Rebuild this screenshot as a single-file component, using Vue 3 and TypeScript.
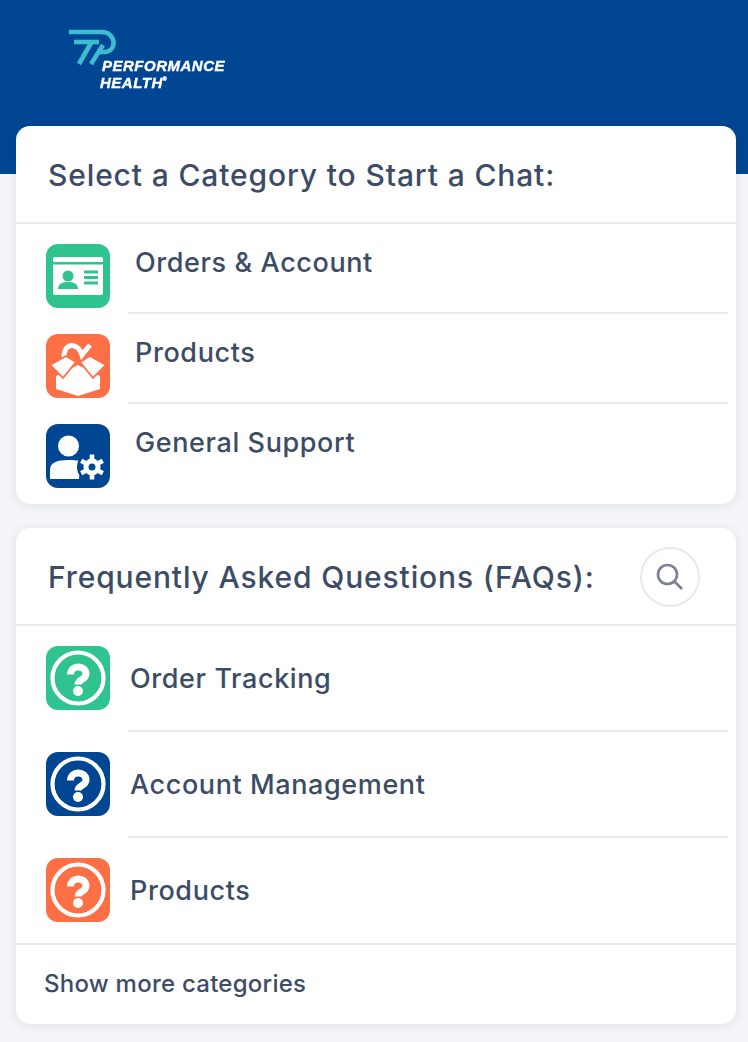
<script setup lang="ts">
interface Row { label: string; color: string; icon: string }
const chats: Row[] = [
  { label: 'Orders & Account', color: '#2fc48d', icon: 'id' },
  { label: 'Products', color: '#ff6f45', icon: 'box' },
  { label: 'General Support', color: '#004692', icon: 'user' },
]
const faqs: Row[] = [
  { label: 'Order Tracking', color: '#2fc48d', icon: 'q' },
  { label: 'Account Management', color: '#004692', icon: 'q' },
  { label: 'Products', color: '#ff6f45', icon: 'q' },
]
</script>

<template>
  <div class="page">
    <header class="hero">
      <div class="logo">
        <svg class="mark" viewBox="0 0 48 40" width="48" height="40">
          <g fill="none" stroke="#3dbcd3" stroke-width="4.600">
            <path d="M0 4H33C47 4 49 24 35 24H28" />
            <path d="M5 14H30" />
            <path d="M22 15 10 36" />
            <path d="M34 17 22 36" />
          </g>
        </svg>
        <div class="wordmark"><span class="w1">PERFORMANCE</span><span class="w2">HEALTH<sup>®</sup></span></div>
      </div>
    </header>

    <main class="content">
      <section class="card">
        <h2 class="card-title">Select a Category to Start a Chat:</h2>
        <ul class="list chat">
          <li v-for="r in chats" :key="r.label" class="row">
            <span class="tile" :style="{ background: r.color }">
              <svg v-if="r.icon === 'id'" viewBox="0 0 64 64">
                <rect x="7" y="13" width="50" height="38" rx="2" fill="#fff" />
                <rect x="7" y="18" width="50" height="2.500" :fill="r.color" />
                <circle cx="22" cy="32" r="5.500" :fill="r.color" />
                <path d="M12 45c0-6 5-7 10-7s10 1 10 7z" :fill="r.color" />
                <path d="M38 28h14M38 33.500h14M38 39h14" :stroke="r.color" stroke-width="2.800" />
              </svg>
              <svg v-else-if="r.icon === 'box'" viewBox="0 0 64 64">
                <path d="M18 23C18 8 32 8 36 21L44 11" fill="none" stroke="#fff" stroke-width="5" />
                <path d="M10 42 32 31 54 42V55L32 62 10 55Z" fill="#fff" />
                <path d="M4 31 20 22 30 28 17 44ZM60 31 44 22 34 28 47 44Z" fill="#fff" :stroke="r.color" stroke-width="1.800" />
              </svg>
              <svg v-else viewBox="0 0 64 64">
                <circle cx="22.500" cy="22" r="10.500" fill="#fff" />
                <path d="M4 55V46c0-7 6-10 19-10 6 0 9 .5 12 1.500L33 55z" fill="#fff" />
                <g transform="translate(46 43)">
                  <circle r="15" :fill="r.color" />
                  <circle r="6" fill="none" stroke="#fff" stroke-width="5" />
                  <path d="M0-12.500V-6M0 6V12.500M-10.800-6.300-5-3M5 3 10.800 6.300M-10.800 6.300-5 3M5-3 10.800-6.300" stroke="#fff" stroke-width="4.600" />
                </g>
              </svg>
            </span>
            <span class="label">{{ r.label }}</span>
          </li>
        </ul>
      </section>

      <section class="card">
        <div class="head">
          <h2 class="card-title bare">Frequently Asked Questions (FAQs):</h2>
          <button class="search" type="button" aria-label="Search">
            <svg viewBox="0 0 32 32" width="32" height="32" fill="none" stroke="#7a8194" stroke-width="2.600">
              <circle cx="13.500" cy="13.500" r="9.500" />
              <path d="M20.500 20.500 28 28" />
            </svg>
          </button>
        </div>
        <ul class="list faq">
          <li v-for="r in faqs" :key="r.label" class="row">
            <span class="tile" :style="{ background: r.color }">
              <svg viewBox="0 0 64 64">
                <circle cx="32" cy="32" r="25.500" fill="none" stroke="#fff" stroke-width="4.200" />
                <path d="M24.500 28.500c0-10 15.500-10 15.500-.5 0 6-8 5-8 10.500" fill="none" stroke="#fff" stroke-width="7" />
                <circle cx="32" cy="45" r="5" fill="#fff" />
              </svg>
            </span>
            <span class="label">{{ r.label }}</span>
          </li>
        </ul>
        <div class="more">Show more categories</div>
      </section>
    </main>
  </div>
</template>

<style>
html, body { margin: 0; background: #f4f5f8; }
</style>

<style scoped>
.page {
  position: relative;
  height: 1042px;
  overflow: hidden;
  background: #f4f5f8;
  font-family: Inter, "Noto Sans", sans-serif;
  color: #3d4c66;
}
.hero {
  height: 174px;
  background: #004692;
  padding: 28px 0 0 69px;
  box-sizing: border-box;
}
.logo { position: relative; height: 64px; }
.mark { display: block; filter: blur(0.5px); }
.wordmark {
  position: absolute;
  left: 31px;
  top: 29px;
  font: italic 700 15px/17px "Liberation Sans", sans-serif;
  letter-spacing: 0.500px;
  color: #fff;
  -webkit-text-stroke: 0.4px #fff;
  filter: blur(0.5px);
}
.w1 { display: block; padding-left: 2px; }
.w2 { display: block; }
.wordmark sup { font-size: 5px; line-height: 0; vertical-align: 7px; }
.content {
  margin-top: -48px;
  padding: 0 12px 0 16px;
  display: flex;
  flex-direction: column;
  gap: 24px;
}
.card {
  background: #fff;
  border-radius: 14px;
  box-shadow: 0 1px 8px rgba(30, 40, 70, 0.1);
  overflow: hidden;
}
.card-title {
  margin: 0;
  font-size: 30px;
  line-height: 36px;
  font-weight: 500;
  letter-spacing: 0.860px;
  color: #3d4c66;
  padding: 31px 32px 29px;
  border-bottom: 2px solid #e9eaec;
}
.card-title.bare { padding: 0; border: 0; white-space: nowrap; }
.head {
  height: 98px;
  box-sizing: border-box;
  padding: 2px 36px 0 32px;
  display: flex;
  align-items: center;
  justify-content: space-between;
  border-bottom: 2px solid #e9eaec;
}
.search {
  width: 60px;
  height: 60px;
  padding: 0;
  border: 2px solid #e8e9ec;
  border-radius: 50%;
  background: #fff;
  display: flex;
  align-items: center;
  justify-content: center;
}
.list { list-style: none; margin: 0; padding: 0; }
.row { position: relative; display: flex; box-sizing: border-box; padding-left: 30px; }
.row::after {
  content: "";
  position: absolute;
  left: 112px;
  right: 8px;
  bottom: 0;
  height: 2px;
  background: #e9eaec;
}
.row:last-child::after { display: none; }
.tile {
  flex: none;
  width: 64px;
  height: 64px;
  border-radius: 12px;
  overflow: hidden;
}
.tile svg { display: block; width: 64px; height: 64px; filter: blur(0.3px); }
.label { font-size: 27px; font-weight: 500; line-height: 38px; letter-spacing: 0.600px; color: #3d4c66; }
.chat .row { height: 90px; padding-top: 20px; }
.chat .row:last-child { height: 100px; }
.chat .label { margin-left: 25px; }
.faq .row { height: 106px; padding-top: 20px; align-items: flex-start; }
.faq .row:last-child { height: 105px; }
.faq .label { margin-left: 20px; line-height: 66px; }
.more {
  height: 81px;
  box-sizing: border-box;
  border-top: 2px solid #e9eaec;
  padding-left: 28px;
  line-height: 78px;
  font-size: 24px;
  font-weight: 500;
  letter-spacing: 0.250px;
  color: #3d4c66;
}
</style>
